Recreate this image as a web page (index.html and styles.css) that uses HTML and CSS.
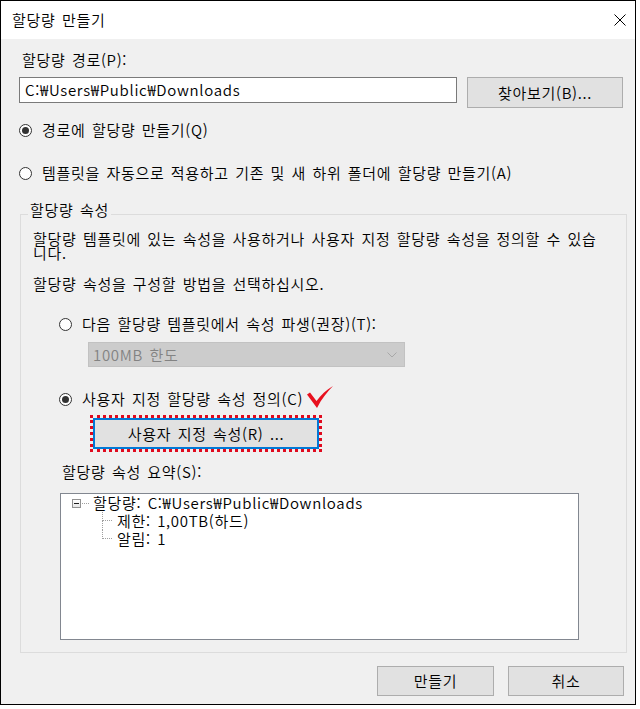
FILE: index.html
```html
<!DOCTYPE html>
<html lang="ko">
<head>
<meta charset="utf-8">
<title>할당량 만들기</title>
<link rel="stylesheet" href="styles.css">
</head>
<body>
<div class="window">
  <div class="titlebar">
    <span class="title">할당량 만들기</span>
    <span class="close"><svg width="12" height="12" viewBox="0 0 12 12"><path d="M0.5 0.5L11.5 11.5M11.5 0.5L0.5 11.5" stroke="#000" stroke-width="1" fill="none"/></svg></span>
  </div>
  <div class="content">
    <div class="path-label">할당량 경로(P):</div>
    <div class="path-row">
      <div class="input">C:₩Users₩Public₩Downloads</div>
      <div class="btn browse">찾아보기(B)...</div>
    </div>
    <div class="radio-row r1"><span class="radio checked"></span><span>경로에 할당량 만들기(Q)</span></div>
    <div class="radio-row r2"><span class="radio"></span><span>템플릿을 자동으로 적용하고 기존 및 새 하위 폴더에 할당량 만들기(A)</span></div>
    <fieldset class="group">
      <legend>할당량 속성</legend>
      <p class="desc">할당량 템플릿에 있는 속성을 사용하거나 사용자 지정 할당량 속성을 정의할 수 있습<br>니다.</p>
      <p class="desc2">할당량 속성을 구성할 방법을 선택하십시오.</p>
      <div class="radio-row r3"><span class="radio"></span><span>다음 할당량 템플릿에서 속성 파생(권장)(T):</span></div>
      <div class="select">
        <span>100MB 한도</span>
        <svg width="10" height="6" viewBox="0 0 10 6"><path d="M0.5 0.5L5 5L9.5 0.5" stroke="#a8a8a8" stroke-width="1" fill="none"/></svg>
      </div>
      <div class="radio-row r4"><span class="radio checked"></span><span>사용자 지정 할당량 속성 정의(C)</span><svg class="tick" width="27" height="22" viewBox="0 0 27 22"><path d="M1 8.5L4 6.5L10.5 15C15 9 20 4 27 0C21 6 15.5 13 11 22Z" fill="#e8101e"/></svg></div>
      <div class="mark">
        <div class="btn custom">사용자 지정 속성(R) ...</div>
      </div>
      <div class="summary-label">할당량 속성 요약(S):</div>
      <div class="tree">
        <div class="node root">
          <span class="expander"><span class="minus"></span></span>
          <span class="stub"></span>
          <span class="node-text">할당량: C:₩Users₩Public₩Downloads</span>
        </div>
        <div class="node child">
          <span class="branch"><span class="upper"></span><span class="lower"></span></span>
          <span class="node-text">제한: 1,00TB(하드)</span>
        </div>
        <div class="node child last">
          <span class="branch"><span class="upper"></span><span class="lower"></span></span>
          <span class="node-text">알림: 1</span>
        </div>
      </div>
    </fieldset>
    <div class="footer">
      <div class="btn ok">만들기</div>
      <div class="btn cancel">취소</div>
    </div>
  </div>
</div>
</body>
</html>
```
FILE: styles.css
```css
html, body {
  margin: 0;
  padding: 0;
  background: #ffffff;
}

body {
  font-family: "Noto Sans CJK KR", sans-serif;
  font-size: 15px;
  font-weight: 350;
  letter-spacing: 0.7px;
  word-spacing: 1.5px;
  color: #000;
}

.window {
  width: 636px;
  height: 705px;
  box-sizing: border-box;
  border: 1px solid #000;
  background: #f0f0f0;
  display: flex;
  flex-direction: column;
}

.titlebar {
  height: 38px;
  flex: none;
  background: #fff;
  display: flex;
  align-items: center;
  justify-content: space-between;
  padding: 0 9px 0 11px;
}

.title {
  line-height: 18px;
}

.close {
  display: flex;
  width: 12px;
  height: 12px;
  margin-top: -1px;
}

.content {
  display: flex;
  flex-direction: column;
  align-items: flex-start;
  padding: 0 11px 0 18px;
}

.path-label {
  margin-top: 12px;
  padding-left: 3px;
  line-height: 18px;
}

.path-row {
  margin-top: 8px;
  display: flex;
  align-items: flex-start;
  gap: 10px;
}

.input {
  width: 438px;
  height: 26px;
  box-sizing: border-box;
  border: 1px solid #7a7a7a;
  background: #fff;
  padding-left: 5px;
  line-height: 24px;
}

.btn {
  box-sizing: border-box;
  border: 1px solid #adadad;
  background: #e1e1e1;
  display: flex;
  align-items: center;
  justify-content: center;
  line-height: 18px;
}

.browse {
  width: 156px;
  height: 31px;
}

.radio-row {
  display: flex;
  align-items: center;
  gap: 10px;
  height: 18px;
  line-height: 18px;
}

.radio {
  flex: none;
  width: 13px;
  height: 13px;
  box-sizing: border-box;
  border: 1px solid #333;
  border-radius: 50%;
  background: #fff;
  display: flex;
  align-items: center;
  justify-content: center;
}

.radio.checked::after {
  content: "";
  width: 7px;
  height: 7px;
  border-radius: 50%;
  background: #333;
}

.r1 {
  margin-top: 13px;
}

.r2 {
  margin-top: 25px;
}

.group {
  margin: 19px 0 0 1px;
  width: 607px;
  box-sizing: border-box;
  border: 1px solid #dcdcdc;
  padding: 5px 12px 12px 12px;
  min-width: 0;
}

.group legend {
  margin-left: -5px;
  padding: 0 2px 8px;
  line-height: 18px;
}

.desc {
  margin: 0;
  line-height: 14px;
}

.desc2 {
  margin: 17px 0 0;
  line-height: 14px;
}

.r3 {
  margin: 24px 0 0 26px;
}

.select {
  margin: 9px 0 0 55px;
  width: 317px;
  height: 25px;
  box-sizing: border-box;
  border: 1px solid #c2c2c2;
  background: #cccccc;
  color: #838383;
  display: flex;
  align-items: center;
  justify-content: space-between;
  padding: 0 7px 0 4px;
  line-height: 18px;
}

.r4 {
  margin: 23px 0 0 26px;
}

.tick {
  flex: none;
  margin-left: -7px;
  margin-bottom: 4px;
  align-self: center;
}

.mark {
  margin: 7px 0 0 57px;
  width: 232px;
  height: 37px;
  box-sizing: border-box;
  border: 3px dotted #e00a1e;
  display: flex;
}

.custom {
  flex: 1;
  border: 2px solid #0078d7;
  background: #e1e1e1;
}

.summary-label {
  margin: 11px 0 0 29px;
  line-height: 18px;
}

.tree {
  margin: 12px 0 0 27px;
  width: 519px;
  height: 147px;
  box-sizing: border-box;
  border: 1px solid #828790;
  background: #fff;
  display: flex;
  flex-direction: column;
}

.node {
  display: flex;
  align-items: center;
  height: 18px;
  line-height: 18px;
}

.root {
  padding-left: 11px;
}

.expander {
  flex: none;
  width: 9px;
  height: 9px;
  box-sizing: border-box;
  border: 1px solid #919191;
  background: linear-gradient(#ffffff, #e6e6e6);
  display: flex;
  align-items: center;
  justify-content: center;
}

.minus {
  width: 5px;
  height: 1px;
  background: #1e1e1e;
}

.stub {
  flex: none;
  width: 7px;
  margin-left: 1px;
  border-top: 1px dotted #a0a0a0;
}

.root .node-text {
  margin-left: 4px;
}

.child {
  padding-left: 41px;
  align-items: stretch;
}

.branch {
  flex: none;
  width: 10px;
  display: flex;
  flex-direction: column;
}

.branch .upper {
  height: 8px;
  border-left: 1px dotted #a0a0a0;
  border-bottom: 1px dotted #a0a0a0;
}

.branch .lower {
  flex: 1;
  border-left: 1px dotted #a0a0a0;
}

.last .branch .lower {
  border-left: none;
}

.child .node-text {
  margin-left: 5px;
}

.footer {
  margin-top: 13px;
  align-self: stretch;
  display: flex;
  justify-content: flex-end;
  gap: 14px;
}

.ok {
  width: 117px;
  height: 30px;
}

.cancel {
  width: 116px;
  height: 30px;
}
```
